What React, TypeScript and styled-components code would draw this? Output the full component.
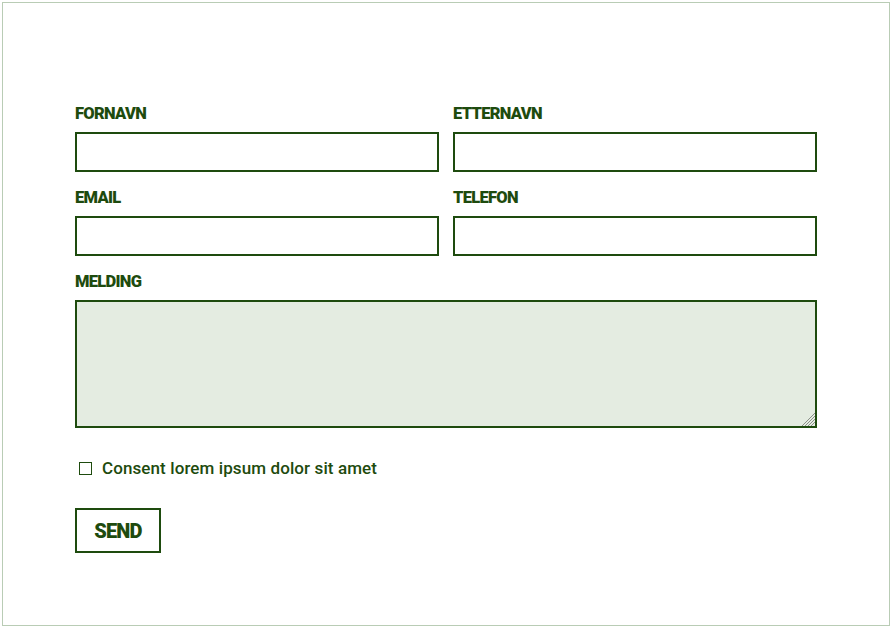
import { FC } from 'react';
import styled, { createGlobalStyle } from 'styled-components';

const GlobalStyle = createGlobalStyle`
    body {
        margin: 0;
        background: #ffffff;
        font-family: Roboto, 'Liberation Sans', sans-serif;
    }
`;

const green = '#1e4b0e';

const Frame = styled.div`
    margin: 2px;
    width: 888px;
    height: 624px;
    box-sizing: border-box;
    border: 1px solid #b9ccb5;
    padding: 101px 72px 0 72px;
`;

const Form = styled.form`
    display: flex;
    flex-direction: column;
    width: 742px;
`;

const Grid = styled.div`
    display: grid;
    grid-template-columns: 1fr 1fr;
    column-gap: 14px;
    row-gap: 16px;
`;

const Field = styled.div<{ $wide?: boolean }>`
    display: flex;
    flex-direction: column;
    gap: 8px;
    grid-column: ${(p) => (p.$wide ? '1 / -1' : 'auto')};
`;

const Label = styled.label`
    font-family: Roboto, 'Liberation Sans', sans-serif;
    font-weight: 900;
    font-size: 16.5px;
    line-height: 20px;
    letter-spacing: -0.7px;
    color: ${green};
    text-transform: uppercase;
`;

const Input = styled.input`
    box-sizing: border-box;
    width: 100%;
    height: 40px;
    margin: 0;
    border: 2px solid ${green};
    border-radius: 0;
    background: #ffffff;
    outline: none;
    padding: 0 10px;
    font: 16px Roboto, sans-serif;
    color: ${green};
`;

const AreaWrap = styled.div`
    position: relative;
`;

const TextArea = styled.textarea`
    box-sizing: border-box;
    display: block;
    width: 100%;
    height: 128px;
    margin: 0;
    border: 2px solid ${green};
    border-radius: 0;
    background: #e4ece1;
    outline: none;
    padding: 8px 10px;
    font: 16px Roboto, sans-serif;
    color: ${green};
    resize: none;
`;

const Grip = styled.svg`
    position: absolute;
    right: 2px;
    bottom: 2px;
    pointer-events: none;
`;

const ConsentRow = styled.label`
    display: flex;
    align-items: center;
    gap: 10px;
    margin-top: 30px;
    padding-left: 4px;
    font-family: Roboto, 'Liberation Sans', sans-serif;
    font-weight: 500;
    font-size: 17px;
    line-height: 20px;
    letter-spacing: 0.1px;
    color: ${green};
`;

const Check = styled.input`
    appearance: none;
    margin: 0;
    width: 13px;
    height: 13px;
    box-sizing: border-box;
    border: 1px solid ${green};
    border-radius: 0;
    background: #ffffff;
`;

const SendButton = styled.button`
    align-self: flex-start;
    margin-top: 30px;
    width: 86px;
    height: 45px;
    box-sizing: border-box;
    border: 2px solid ${green};
    border-radius: 0;
    background: #ffffff;
    color: ${green};
    font-family: Roboto, 'Liberation Sans', sans-serif;
    font-weight: 900;
    font-size: 20px;
    letter-spacing: -0.8px;
    text-transform: uppercase;
    cursor: pointer;
`;

const fields = [
    { id: 'fornavn', label: 'Fornavn' },
    { id: 'etternavn', label: 'Etternavn' },
    { id: 'email', label: 'Email' },
    { id: 'telefon', label: 'Telefon' },
];

const App: FC = () => {
    return (
        <>
            <GlobalStyle />
            <Frame>
                <Form onSubmit={(e) => e.preventDefault()}>
                    <Grid>
                        {fields.map((f) => (
                            <Field key={f.id}>
                                <Label htmlFor={f.id}>{f.label}</Label>
                                <Input id={f.id} type="text" />
                            </Field>
                        ))}
                        <Field $wide>
                            <Label htmlFor="melding">Melding</Label>
                            <AreaWrap>
                                <TextArea id="melding" />
                                <Grip width="14" height="14" viewBox="0 0 14 14">
                                    <g stroke="#8a8f88" strokeWidth="1">
                                        <line x1="14" y1="1" x2="1" y2="14" />
                                        <line x1="14" y1="4" x2="4" y2="14" />
                                        <line x1="14" y1="7" x2="7" y2="14" />
                                        <line x1="14" y1="10" x2="10" y2="14" />
                                    </g>
                                </Grip>
                            </AreaWrap>
                        </Field>
                    </Grid>
                    <ConsentRow>
                        <Check type="checkbox" />
                        Consent lorem ipsum dolor sit amet
                    </ConsentRow>
                    <SendButton type="submit">Send</SendButton>
                </Form>
            </Frame>
        </>
    );
};

export default App;
